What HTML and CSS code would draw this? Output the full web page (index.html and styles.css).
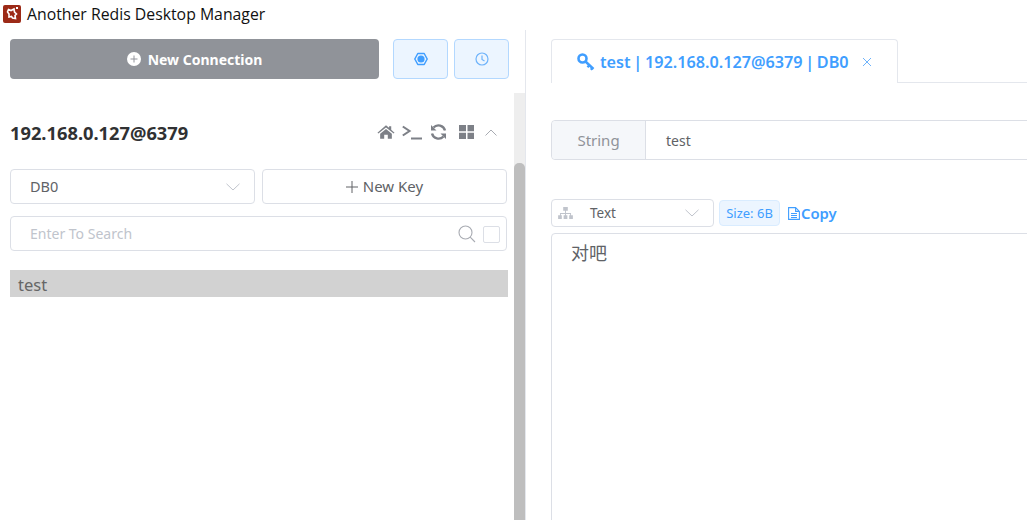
FILE: index.html
```html
<!DOCTYPE html>
<html lang="en">
<head>
<meta charset="utf-8">
<title>Another Redis Desktop Manager</title>
<link rel="stylesheet" href="styles.css">
</head>
<body>
<header class="titlebar">
  <svg class="logo" viewBox="0 0 18 18" width="18" height="18"><rect width="18" height="18" rx="2" fill="#9c2a17"/><path d="M5.500 4.500l2.500 1 3-1.500 .5 3 2 2-1.500 1.500 .5 3-3-.5-1-1.500-2.500 .5 0-3-1.500-2z" fill="none" stroke="#fff" stroke-width="1.600"/><rect x="13" y="2" width="2" height="2" fill="#fff"/></svg>
  <span class="apptitle">Another Redis Desktop Manager</span>
</header>
<div class="main">
  <aside class="aside">
    <div class="toolbar">
      <button class="newconn"><svg viewBox="0 0 14 14" width="14" height="14"><circle cx="7" cy="7" r="7" fill="#fff"/><path d="M7 3.500v7M3.500 7h7" stroke="#92949b" stroke-width="1"/></svg>New Connection</button>
      <button class="iconbtn"><svg viewBox="0 0 14 14" width="14" height="14"><path d="M3.800 1.500h6.400L13.200 7l-3 5.500H3.800L.8 7z" fill="none" stroke="#409eff" stroke-width="1.500" stroke-linejoin="round"/><circle cx="7" cy="7" r="3.600" fill="#409eff"/></svg></button>
      <button class="iconbtn"><svg viewBox="0 0 14 14" width="14" height="14"><circle cx="7" cy="7" r="6" fill="none" stroke="#6eb3fb" stroke-width="1.200"/><path d="M7 3.500v4l2.500 1.500" fill="none" stroke="#6eb3fb" stroke-width="1.200"/></svg></button>
    </div>
    <div class="scrollarea">
      <div class="listcol">
        <div class="connhead">
          <span class="connname">192.168.0.127@6379</span>
          <div class="connicons">
            <svg class="ic-home" viewBox="0 0 20 17" width="18" height="16"><path d="M10 1l3.400 2.900V2h2.400v4l3.700 3.200-1 1L10 3.500 1.500 10.200l-1-1zM3.500 10.500L10 5.200l6.500 5.300V16h-4.500v-4.500H8V16H3.500z" fill="#7d8087"/></svg>
            <svg class="ic-term" viewBox="0 0 20 16" width="20" height="16"><path d="M.8 2.500L7.500 7 .8 11.500" fill="none" stroke="#7d8087" stroke-width="2.100"/><rect x="9" y="13.500" width="11" height="2" fill="#7d8087"/></svg>
            <svg class="ic-sync" viewBox="0 0 17 16" width="17" height="16"><path d="M15 6.500A6.800 6.800 0 0 0 3.500 3.500M2 9.500A6.800 6.800 0 0 0 13.500 12.500" fill="none" stroke="#7d8087" stroke-width="2.400"/><path d="M1 1v5.500h5.500zM16 15V9.500h-5.500z" fill="#7d8087"/></svg>
            <svg class="ic-grid" viewBox="0 0 15 14" width="15" height="14"><path d="M0 0h7v6.200H0zM8.500 0H15v6.200H8.500zM0 7.800h7V14H0zM8.500 7.800H15V14H8.500z" fill="#7d8087"/></svg>
            <svg class="caret" viewBox="0 0 12 7" width="12" height="7"><path d="M.5 6.500L6 1l5.500 5.500" fill="none" stroke="#a8abb2" stroke-width="1"/></svg>
          </div>
        </div>
        <div class="formrow">
          <div class="field dbselect"><span class="fieldtext">DB0</span><svg viewBox="0 0 14 8" width="14" height="8"><path d="M.5 .8L7 7l6.500-6.200" fill="none" stroke="#c0c4cc" stroke-width="1"/></svg></div>
          <button class="field newkey"><svg viewBox="0 0 12 12" width="12" height="12"><path d="M6 0v12M0 6h12" stroke="#606266" stroke-width="1"/></svg><span class="fieldtext">New Key</span></button>
        </div>
        <div class="field search">
          <span class="placeholder">Enter To Search</span>
          <svg viewBox="0 0 18 18" width="18" height="18"><circle cx="7.500" cy="7.500" r="6.500" fill="none" stroke="#a8abb2" stroke-width="1.100"/><path d="M12.200 12.200L17 17" stroke="#a8abb2" stroke-width="1.100"/></svg>
          <span class="checkbox"></span>
        </div>
        <div class="keyitem">test</div>
      </div>
      <div class="scrolltrack"><div class="scrollthumb"></div></div>
    </div>
  </aside>
  <section class="content">
    <div class="tabs">
      <div class="tab">
        <svg viewBox="0 0 18 18" width="18" height="18"><circle cx="5.500" cy="5.500" r="4" fill="none" stroke="#409eff" stroke-width="2.600"/><path d="M8.500 8.500l8 7.500M12.500 12l-2 2.200M15.500 15l-1.700 1.800" fill="none" stroke="#409eff" stroke-width="2.400"/></svg>
        <span class="tabtext">test | 192.168.0.127@6379 | DB0</span>
        <svg class="tabclose" viewBox="0 0 10 10" width="10" height="10"><path d="M1 1l8 8M9 1l-8 8" stroke="#6eb3fb" stroke-width="1"/></svg>
      </div>
    </div>
    <div class="keyline">
      <span class="keytype">String</span>
      <span class="keyname">test</span>
    </div>
    <div class="viewer">
      <div class="field viewselect">
        <svg viewBox="0 0 16 13" width="15" height="12"><path d="M5.500 0h5v4h-5zM0 9h4v4H0zM6 9h4v4H6zM12 9h4v4h-4zM7.500 4h1v2.500h5.500V9h-1V7.500H8.500V9h-1V7.500H3V9H2V6.500h5.500z" fill="#c0c4cc"/></svg>
        <span>Text</span>
        <svg class="chev" viewBox="0 0 14 8" width="14" height="8"><path d="M.5 .8L7 7l6.500-6.200" fill="none" stroke="#c0c4cc" stroke-width="1"/></svg>
      </div>
      <span class="sizetag">Size: 6B</span>
      <span class="copy"><svg viewBox="0 0 12 13" width="12" height="13"><path d="M.6 .6h7l3.800 3.800v8H.6zM7.600 .6v3.800h3.800M3 6.500h6M3 8.500h6M3 10.500h6" fill="none" stroke="#409eff" stroke-width="1.100"/></svg>Copy</span>
    </div>
    <div class="valuebox">对吧</div>
  </section>
</div>
</body>
</html>
```
FILE: styles.css
```css
* { box-sizing: border-box; }
html, body { margin: 0; height: 100%; overflow: hidden; }
body {
  width: 1027px;
  height: 520px;
  background: #fff;
  color: #606266;
  font-family: "Noto Sans", "Noto Sans CJK SC", sans-serif;
  font-size: 14px;
}
button { font-family: inherit; margin: 0; cursor: pointer; }

.titlebar {
  height: 30px;
  display: flex;
  align-items: center;
  padding: 0 0 2px 3px;
  gap: 6px;
}
.logo { flex: none; }
.apptitle { font-family: "Open Sans", sans-serif; font-size: 15.800px; color: #111; }

.main { display: flex; height: 490px; }
.aside {
  width: 526px;
  flex: none;
  border-right: 1px solid #e4e7ed;
  display: flex;
  flex-direction: column;
  padding-top: 9px;
}
.toolbar { display: flex; padding-left: 10px; height: 40px; }
.newconn {
  width: 369px;
  height: 40px;
  background: #909399;
  border: 0;
  border-radius: 4px;
  color: #fff;
  font-weight: 700;
  font-size: 14px;
  display: flex;
  align-items: center;
  justify-content: center;
  gap: 7px;
}
.iconbtn {
  width: 55px;
  height: 40px;
  background: #ecf5ff;
  border: 1px solid #b3d8ff;
  border-radius: 4px;
  display: flex;
  align-items: center;
  justify-content: center;
  padding: 0;
  margin-left: 6px;
}
.iconbtn:nth-child(2) { margin-left: 14px; }

.scrollarea { display: flex; flex: 1; padding-top: 14px; min-height: 0; }
.listcol { width: 514px; flex: none; padding-left: 10px; }
.connhead {
  height: 54px;
  margin-top: 12px;
  display: flex;
  align-items: center;
  justify-content: space-between;
  padding-right: 17px;
}
.connname { font-size: 18.300px; font-weight: 700; color: #303133; }
.connicons { display: flex; align-items: center; }
.ic-term { margin-left: 7px; }
.ic-sync { margin-left: 8px; }
.ic-grid { margin-left: 12px; }
.caret { margin-left: 11px; }

.field {
  background: #fff;
  border: 1px solid #dcdfe6;
  border-radius: 4px;
  display: flex;
  align-items: center;
}
.fieldtext { margin-top: -2px; }
.formrow { display: flex; gap: 7px; margin-top: 10px; width: 497px; }
.dbselect {
  width: 245px;
  height: 35px;
  padding: 0 14px 0 19px;
  justify-content: space-between;
  font-size: 14.500px;
}
.newkey {
  width: 245px;
  height: 35px;
  justify-content: center;
  gap: 5px;
  color: #606266;
  font-size: 15px;
  padding: 0;
}
.search {
  width: 497px;
  height: 35px;
  margin-top: 12px;
  padding: 0 6px 0 19px;
}
.placeholder { color: #c0c4cc; flex: 1; font-size: 14px; }
.checkbox {
  width: 17px;
  height: 17px;
  border: 1px solid #dcdfe6;
  border-radius: 2px;
  margin-left: 7px;
  margin-top: 2px;
}
.keyitem {
  width: 498px;
  height: 27px;
  margin-top: 19px;
  background: #d2d2d2;
  padding-left: 8px;
  font-size: 16.500px;
  line-height: 30px;
  color: #666;
}
.scrolltrack {
  width: 11px;
  flex: none;
  background: #eee;
  padding-top: 70px;
}
.scrollthumb { background: #bebebe; height: 100%; border-radius: 5px 5px 0 0; }

.content { flex: 1; min-width: 0; padding-left: 25px; overflow: hidden; }
.tabs { height: 44px; margin-top: 9px; border-bottom: 1px solid #e4e7ed; display: flex; }
.tab {
  width: 347px;
  height: 44px;
  border: 1px solid #e4e7ed;
  border-bottom: 0;
  border-radius: 4px 4px 0 0;
  background: #fff;
  display: flex;
  align-items: center;
  padding-left: 25px;
  color: #409eff;
}
.tabtext { font-size: 16.200px; font-weight: 600; margin-left: 5px; white-space: nowrap; word-spacing: -1.500px; }
.tabclose { margin-left: 13px; }

.keyline {
  margin-top: 37px;
  height: 40px;
  width: 600px;
  border: 1px solid #dcdfe6;
  border-radius: 4px;
  display: flex;
  align-items: center;
}
.keytype {
  width: 94px;
  height: 38px;
  background: #f5f7fa;
  border-right: 1px solid #dcdfe6;
  border-radius: 4px 0 0 4px;
  color: #909399;
  display: flex;
  align-items: center;
  justify-content: center;
  font-size: 15px;
}
.keyname { padding-left: 20px; font-size: 14px; }

.viewer { display: flex; align-items: center; margin-top: 39px; height: 28px; }
.viewselect { width: 163px; height: 28px; padding: 0 14px 0 6px; font-size: 13.500px; }
.viewselect span { margin-left: 17px; flex: 1; }
.sizetag {
  margin-left: 5px;
  height: 26px;
  width: 61px;
  background: #ecf5ff;
  border: 1px solid #d9ecff;
  border-radius: 4px;
  color: #409eff;
  font-size: 13px;
  display: flex;
  align-items: center;
  justify-content: center;
}
.copy {
  margin-left: 8px;
  color: #409eff;
  font-weight: 600;
  font-size: 14.800px;
  display: flex;
  align-items: center;
  gap: 1px;
}
.valuebox {
  margin-top: 6px;
  height: 300px;
  width: 600px;
  border: 1px solid #dcdfe6;
  border-radius: 4px 0 0 0;
  padding: 6px 19px;
  font-size: 18px;
  line-height: 24px;
  font-family: "Noto Sans CJK SC", sans-serif;
}
```
